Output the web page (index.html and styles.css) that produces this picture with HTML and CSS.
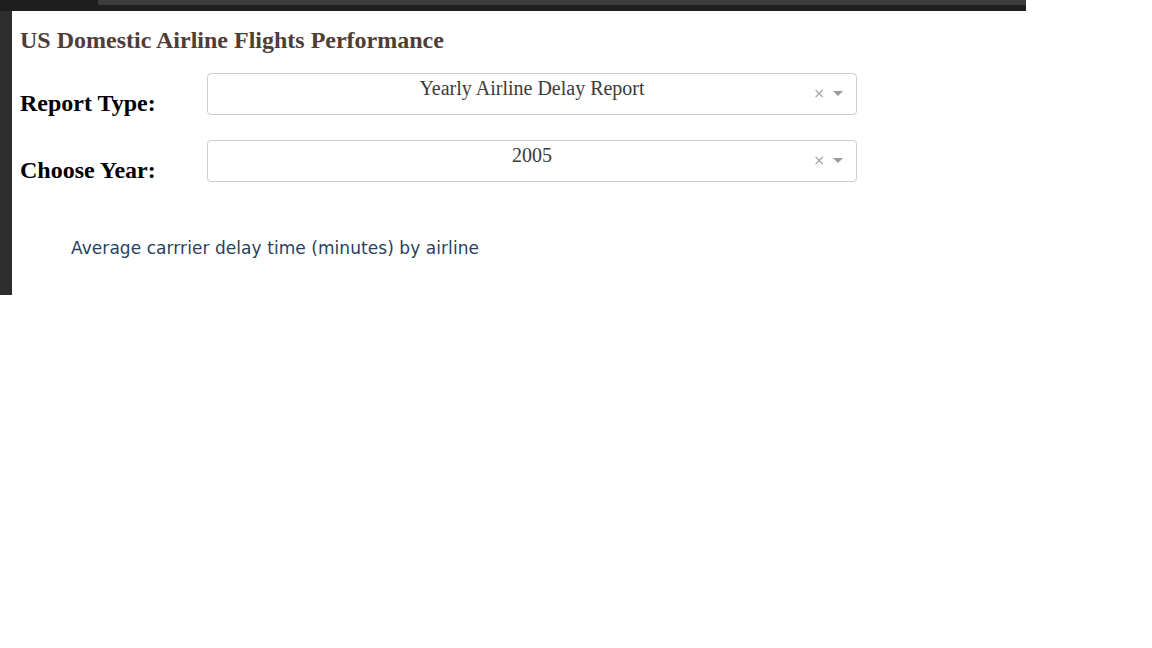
FILE: index.html
```html
<!DOCTYPE html>
<html>
<head>
<meta charset="utf-8">
<link rel="stylesheet" href="styles.css">
</head>
<body>
<div class="frame">
  <div class="topbar">
    <div class="tab-dark"></div>
    <div class="tab-light"></div>
  </div>
  <div class="main">
    <div class="sidebar"></div>
    <div class="content">
      <h1 class="title">US Domestic Airline Flights Performance</h1>
      <div class="form-row">
        <h2 class="label">Report Type:</h2>
        <div class="dropdown">
          <span class="value">Yearly Airline Delay Report</span>
          <span class="clear">×</span>
          <span class="arrow"></span>
        </div>
      </div>
      <div class="form-row">
        <h2 class="label">Choose Year:</h2>
        <div class="dropdown">
          <span class="value">2005</span>
          <span class="clear">×</span>
          <span class="arrow"></span>
        </div>
      </div>
      <div class="chart-title">Average carrrier delay time (minutes) by airline</div>
    </div>
  </div>
</div>
</body>
</html>
```

FILE: styles.css
```css
html, body {
  margin: 0;
  padding: 0;
  background: #ffffff;
}

.frame {
  width: 1026px;
}

.topbar {
  height: 11px;
  background: #1e1e1e;
  display: flex;
  align-items: flex-start;
}

.tab-dark {
  width: 98px;
  height: 5px;
  background: #1e1e1e;
}

.tab-light {
  flex: 1;
  height: 5px;
  background: #3c3c3c;
}

.main {
  display: flex;
  height: 284px;
}

.sidebar {
  width: 12px;
  background: #2d2d2d;
}

.content {
  flex: 1;
  background: #ffffff;
  padding-left: 8px;
  font-family: "Liberation Serif", "Times New Roman", serif;
}

.title {
  margin: 15px 0 0 0;
  font-size: 24px;
  line-height: 28px;
  font-weight: bold;
  color: #503d36;
}

.form-row {
  display: flex;
  align-items: flex-start;
  margin-top: 19px;
}

.form-row + .form-row {
  margin-top: 22px;
}

.label {
  width: 187px;
  margin: 15px 0 0 0;
  font-size: 24px;
  line-height: 30px;
  font-weight: bold;
  color: #000000;
}

.dropdown {
  position: relative;
  width: 648px;
  height: 40px;
  border: 1px solid #cccccc;
  border-radius: 4px;
  background: #ffffff;
  text-align: center;
}

.value {
  display: block;
  padding-top: 2px;
  font-size: 20px;
  line-height: 24px;
  color: #3a3a3a;
}

.clear {
  position: absolute;
  right: 31px;
  top: 8px;
  font-family: "DejaVu Sans", sans-serif;
  font-size: 14px;
  line-height: 22px;
  color: #a0a0a0;
}

.arrow {
  position: absolute;
  right: 13px;
  top: 17px;
  width: 0;
  height: 0;
  border-left: 5px solid transparent;
  border-right: 5px solid transparent;
  border-top: 5px solid #999999;
}

.chart-title {
  margin: 53px 0 0 51px;
  font-family: "DejaVu Sans", Verdana, sans-serif;
  font-size: 17px;
  line-height: 20px;
  letter-spacing: 0.06px;
  color: #2a3f5f;
}
```
